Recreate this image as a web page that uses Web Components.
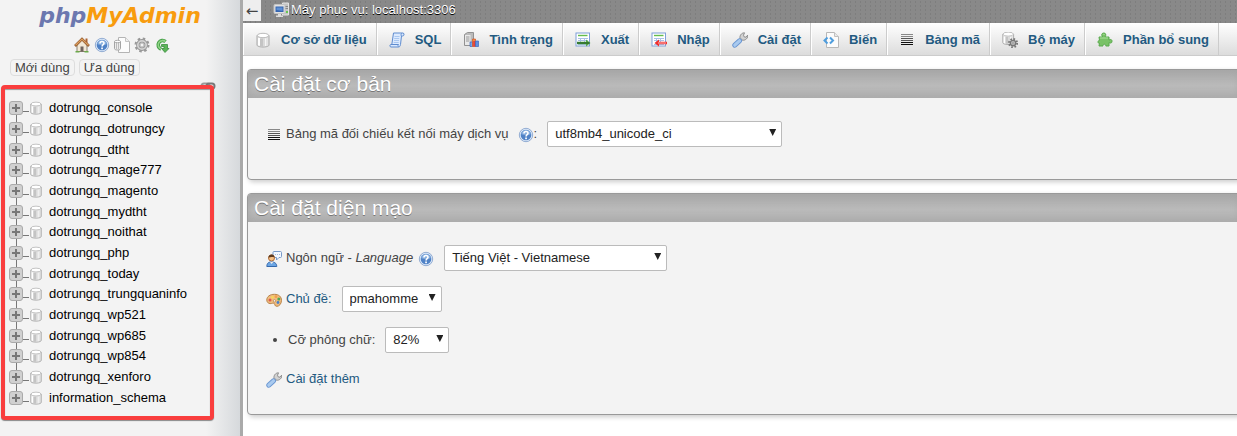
<!DOCTYPE html>
<html lang="vi">
<head>
<meta charset="utf-8">
<title>phpMyAdmin</title>
<style>
  html, body {
    height: 100%;
    margin: 0;
  }
  body {
    font: 13px/18px "Liberation Sans", Arial, sans-serif;
    color: #444;
    background: #fff;
    overflow: hidden;
  }
</style>
</head>
<body>

<pma-layout>
  <pma-navigation slot="navigation"></pma-navigation>
  <pma-server-bar>Máy phục vụ: localhost:3306</pma-server-bar>
  <pma-tabs>
    <pma-tab icon="db">Cơ sở dữ liệu</pma-tab>
    <pma-tab icon="sql">SQL</pma-tab>
    <pma-tab icon="status">Tình trạng</pma-tab>
    <pma-tab icon="export">Xuất</pma-tab>
    <pma-tab icon="import">Nhập</pma-tab>
    <pma-tab icon="wrench">Cài đặt</pma-tab>
    <pma-tab icon="vars">Biến</pma-tab>
    <pma-tab icon="lines">Bảng mã</pma-tab>
    <pma-tab icon="engine">Bộ máy</pma-tab>
    <pma-tab icon="plugin">Phần bổ sung</pma-tab>
  </pma-tabs>
  <pma-panel>
    <span slot="title">Cài đặt cơ bản</span>
    <pma-field icon="lines" size="xl" value="utf8mb4_unicode_ci" help colon>Bảng mã đối chiếu kết nối máy dịch vụ</pma-field>
  </pma-panel>
  <pma-panel>
    <span slot="title">Cài đặt diện mạo</span>
    <pma-field icon="language" size="l" value="Tiếng Việt - Vietnamese" help>Ngôn ngữ - <i>Language</i></pma-field>
    <pma-field icon="theme" size="m" value="pmahomme" link>Chủ đề:</pma-field>
    <pma-field size="s" value="82%">Cỡ phông chữ:</pma-field>
    <pma-link icon="wrench">Cài đặt thêm</pma-link>
  </pma-panel>
</pma-layout>

<script>
// Icons, all drawn on a 16x16 box
const DB = `
  <path d="M2 3.500v9.500c0 1 2 2 6 2s6-1 6-2V3.500z" fill="#e4e4e4" stroke="#a8a8a8"/>
  <path d="M3 6h2v7.800l-2-.6z" fill="#fff"/>
  <path d="M5 6.500h3v7.800H6l-1-.3z" fill="#c4c4c4"/>
  <path d="M8 6.500h2v7.700H8z" fill="#dadada"/>
  <path d="M10 6.500h1v7.500h-1z" fill="#f6f6f6"/>
  <ellipse cx="8" cy="3.500" rx="5.700" ry="2.200" fill="#fff" stroke="#bbb"/>`;

const GEAR = `
  <circle cx="8" cy="8" r="6.500" stroke="#999" stroke-width="2" stroke-dasharray="2.550 2.550"/>
  <circle cx="8" cy="8" r="4.200" fill="none" stroke="#939393" stroke-width="3.400"/>
  <circle cx="8" cy="8" r="4.200" fill="none" stroke="#d2d2d2" stroke-width="1.800"/>
  <circle cx="8" cy="8" r="2" fill="#f3f3f3" stroke="#8a8a8a" stroke-width=".6"/>`;

const SHEET = `
  <rect x="1" y="1" width="13.500" height="13" fill="#fff" stroke="#7f9fd8"/>
  <path d="M3 3.500h9.500" stroke="#64bd4b" stroke-width="1.400"/>
  <path d="M3 6.500h10M3 8.500h10M3 12.500h10M5.500 6v7M9.500 6v7" stroke="#a9c0e8"/>`;

const ICONS = {
  db: DB,
  gear: GEAR,
  home: `
    <path d="M3 8v6.500h10V8L8 3z" fill="#f2e8d6" stroke="#8a8173"/>
    <path d="M11.500 1.500h2V6h-2z" fill="#aa6335"/>
    <path d="M1 9l7-7 7 7" stroke="#935829" stroke-width="2.600"/>
    <path d="M1.500 8.300L8 2l6.500 6.300" stroke="#dda061" stroke-width="1.200"/>
    <path d="M6.500 9.500h3v5h-3z" fill="#70645e"/>
    <path d="M1.500 14.800h4M10.500 14.800h4" stroke="#6ba94a" stroke-width="1.400"/>`,
  help: `
    <circle cx="8" cy="8" r="6.700" fill="#dbe8f8" stroke="#7d9cc9" stroke-width=".8"/>
    <circle cx="8" cy="8" r="5.300" fill="#4f82c6"/>
    <path d="M3.200 7a4.900 4.900 0 0 1 9.600 0c-2 1.500-7 1.500-9.600 0z" fill="#86aede"/>
    <path d="M6 6.400c0-2.600 4-2.500 4-.2 0 1.500-1.900 1.400-1.900 3.200" stroke="#fff" stroke-width="1.600"/>
    <rect x="7.200" y="10.500" width="1.700" height="1.700" fill="#fff"/>`,
  docs: `
    <path d="M4.500.5h7l4 4v11h-11z" fill="#fcfcfc" stroke="#b4b4b4"/>
    <path d="M11.500.5v4h4" fill="#eee" stroke="#c4c4c4"/>
    <path d="M.5 4.500v7c0 1 1.200 1.500 3 1.500s3-.5 3-1.500v-7z" fill="#ececec" stroke="#a3a3a3"/>
    <path d="M2.500 6v6M4.500 6v6" stroke="#bbb"/>
    <ellipse cx="3.500" cy="4.500" rx="3" ry="1.200" fill="#fff" stroke="#aaa"/>`,
  reload: `
    <path d="M11.500 4.600A4.400 4.400 0 1 0 7 12" stroke="#3f9a42" stroke-width="3.600"/>
    <path d="M11.500 4.600A4.400 4.400 0 1 0 7 12" stroke="#8fd385" stroke-width="1.800"/>
    <path d="M7.500 7.500h6v4h1.500L11 15.500 7.500 11.500h2.500V9.500H7.500z" fill="#5cb557" stroke="#2c8332" stroke-width=".7"/>`,
  chain: `
    <rect x="1.500" y="5.500" width="8" height="5" rx="2.500" stroke="#999" stroke-width="2"/>
    <rect x="6.500" y="5.500" width="8" height="5" rx="2.500" stroke="#777" stroke-width="2"/>`,
  server: `
    <path d="M9.500 1h6v12h-6z" fill="#c4c4c4" stroke="#e4e4e4"/>
    <path d="M12 4.500h3M12 6.500h3" stroke="#888"/>
    <rect x="13" y="9" width="2" height="2" fill="#67c94f"/>
    <rect x="1" y="2.500" width="11" height="9" rx="1" fill="#e2e2e2" stroke="#c2c2c2"/>
    <rect x="2.500" y="4.500" width="8" height="5.500" fill="#3565b0"/>
    <path d="M3.500 5.500h6V9l-6-1z" fill="#5c8fd4"/>
    <path d="M5 12h3v1.500h2V15H3v-1.500h2z" fill="#ddd"/>`,
  sql: `
    <path d="M4.500 1h9.800c1.300 1.200.8 3-.8 3h-1l-1 8.500c-.2 1.500-.8 2.500-2 2.500H2c-1.500 0-1.500-2.500 0-2.500h.8z" fill="#dceafe" stroke="#5f8ccf"/>
    <path d="M12.500 4c-.8-.8-.5-2.300.5-2.800M2 12.500h7.500c-.8.8-.6 1.800.2 2.300" stroke="#5f8ccf"/>
    <path d="M5.500 4.500h5M5.200 6.500h5M5 8.500h5M4.700 10.500h5" stroke="#a9c7f0"/>`,
  status: `
    <path d="M1.500 2.500l3-2h6v11l-3 2h-6z" fill="#bbb" stroke="#929292"/>
    <path d="M2 3h5.500v10H2z" fill="#e9e9e9"/>
    <path d="M3 5h3.500M3 7h3.500M3 9h3.500" stroke="#999"/>
    <path d="M7 10h2.500v4.500H7z" fill="#78a5e8" stroke="#3d69bc" stroke-width=".7"/>
    <path d="M9.500 7h3v7.500h-3z" fill="#f5893d" stroke="#d3552b" stroke-width=".7"/>
    <path d="M10.200 9h2.300v5.500h-2.300z" fill="#e3423c"/>
    <path d="M12.500 9h3v5.500h-3z" fill="#5d91e3" stroke="#3d69bc" stroke-width=".7"/>`,
  export: SHEET + `
    <path d="M2 9.800h9V7.600l4.500 3.400-4.500 3.400v-2.200H2z" fill="#55a64a"/>
    <path d="M2 11h12.500" stroke="#1b4f1b"/>`,
  import: SHEET + `
    <path d="M16 9.800H8V7.600L3.500 11 8 14.400v-2.200h8z" fill="#ef3030"/>
    <path d="M7 11h8" stroke="#ffaeae"/>`,
  wrench: `
    <path d="M8 6.500C7.500 3.500 9.500.8 12.500.8l-1 2.400.7 1.700 1.800.3L15.800 3c.4 3-2.300 5.600-5.300 5.200z" fill="#d2d2d2" stroke="#8c8c8c"/>
    <path d="M7.500 8.500l2-2" stroke="#aaa" stroke-width="3"/>
    <path d="M2.800 13.200L7.500 8.800" stroke="#6b97d2" stroke-width="5" stroke-linecap="round"/>
    <path d="M2.800 13.200L7.500 8.800" stroke="#a9caef" stroke-width="3.200" stroke-linecap="round"/>`,
  vars: `
    <path d="M3.500.5h8l4 4v11h-12z" fill="#fbfbfb" stroke="#b8b8b8"/>
    <path d="M11.500.5v4h4" fill="#e9e9e9" stroke="#c0c0c0"/>
    <path d="M4.500 5.500L1.500 8.500l3 3M7 5.500l3 3-3 3" stroke="#4f9ddd" stroke-width="2"/>`,
  lines: `
    <path d="M2 2.500h12M2 4.500h12" stroke="#888"/>
    <path d="M2 6.500h12M2 8.500h12" stroke="#555"/>
    <path d="M2 10.500h12M2 12.500h12" stroke="#111"/>`,
  engine: `
    <g transform="translate(-1 -1) scale(.9)">${DB}</g>
    <g transform="translate(6 6) scale(.63)">
      <circle cx="8" cy="8" r="6.500" stroke="#777" stroke-width="3" stroke-dasharray="2.550 2.550"/>
      <circle cx="8" cy="8" r="4.300" fill="#c4c4c4" stroke="#777" stroke-width="2"/>
      <circle cx="8" cy="8" r="1.500" fill="#eee" stroke="#777"/>
    </g>`,
  plugin: `
    <path d="M2 5h3.500C4 2.500 5 1 6.800 1s2.700 1.500 1.300 4H12v3c2-1.200 3-.3 3 1.200s-1 2.500-3 1.400V14H8.800c.6-2.300-3.400-2.300-2.800 0H2l.5-2.800c-2 .5-2-3 0-2.700z" fill="#79c267" stroke="#5aaa4e"/>
    <path d="M3 6h8M5.800 2.800c.5-.8 1.500-.8 2 0" stroke="#abdf9c"/>`,
  language: `
    <path d="M7 1.500c0-.6.4-1 1-1h6.500c.6 0 1 .4 1 1v4c0 .6-.4 1-1 1H13L10.500 9V6.500H8c-.6 0-1-.4-1-1z" fill="#f3f8ff" stroke="#7799c8"/>
    <path d="M9 3.500h1M11 3.500h1M13 3.500h1" stroke="#aabfdc"/>
    <circle cx="5.500" cy="7" r="3" fill="#f5bf85" stroke="#ae6b37"/>
    <path d="M2.500 6.500c0-4 6-4 6-.3C6.500 6 5 5.500 2.500 6.500z" fill="#5c3b20"/>
    <path d="M.8 15.500c.2-3.800 2-4.500 4.700-4.500s5 .7 5.300 4.500z" fill="#6ca6e4" stroke="#3569ad"/>
    <path d="M4 11l1.500 2 2-2z" fill="#eee"/>`,
  theme: `
    <path d="M.8 8C.8 4.500 4 2.300 8.500 2.300s7 2.700 7 6c0 3.700-2.500 6-4.600 6-2.400 0-1.700-2-2.800-2.900-1-.8-2.300.4-4 .2C2 11.300.8 10 .8 8z" fill="#efbd7f" stroke="#b98349"/>
    <circle cx="4" cy="8" r="1.500" fill="#df594b"/>
    <circle cx="6.500" cy="5.300" r="1.400" fill="#f6d75a"/>
    <circle cx="10" cy="4.700" r="1.400" fill="#f3a04b"/>
    <circle cx="12.800" cy="7" r="1.500" fill="#51a951"/>
    <circle cx="12" cy="10.500" r="1.400" fill="#487fcb"/>
    <circle cx="8.500" cy="8.800" r="1.200" fill="#f5f5f5" stroke="#a96f36" stroke-width=".6"/>`
};

const DATABASES = [
  "dotrungq_console", "dotrungq_dotrungcy", "dotrungq_dtht", "dotrungq_mage777",
  "dotrungq_magento", "dotrungq_mydtht", "dotrungq_noithat", "dotrungq_php",
  "dotrungq_today", "dotrungq_trungquaninfo", "dotrungq_wp521", "dotrungq_wp685",
  "dotrungq_wp854", "dotrungq_xenforo", "information_schema"
];

const render = (element, html) => {
  element.attachShadow({ mode: "open" }).innerHTML = html;
};

class PmaIcon extends HTMLElement {
  connectedCallback() {
    render(this, `
      <style>
        :host { display: block; flex: none; width: 16px; height: 16px; }
        svg { display: block; width: 100%; height: 100%; }
      </style>
      <svg viewBox="0 0 16 16" fill="none" aria-hidden="true">${ICONS[this.getAttribute("name")]}</svg>
    `);
  }
}

class PmaLayout extends HTMLElement {
  connectedCallback() {
    render(this, `
      <style>
        :host { display: flex; min-height: 100vh; }
        main { flex: 1; min-width: 0; overflow: hidden; }
      </style>
      <slot name="navigation"></slot>
      <main><slot></slot></main>
    `);
  }
}

class PmaNavigation extends HTMLElement {
  connectedCallback() {
    const links = [
      ["home", "Trang chủ"], ["help", "Trợ giúp"], ["docs", "Tài liệu"],
      ["gear", "Cài đặt"], ["reload", "Tải lại"]
    ];
    render(this, `
      <style>
        :host {
          display: flex;
          flex: none;
          flex-direction: column;
          box-sizing: border-box;
          width: 243px;
          height: 100vh;
          border-right: 3px solid #aaa;
          background: linear-gradient(to left, #d6d9dc, #f3f3f3 34px);
        }
        a { color: inherit; text-decoration: none; }
        .logo {
          align-self: center;
          font: italic bold 22px/32px "DejaVu Sans", sans-serif;
          color: #f89c0e;
        }
        .logo span { color: #6c78af; }
        .links {
          display: flex;
          justify-content: center;
          gap: 4px;
          padding: 5px 0 0 3px;
        }
        .recent {
          display: flex;
          gap: 4px;
          padding: 6px 10px 0;
        }
        button {
          padding: 0 4px;
          border: 1px solid #ddd;
          border-radius: 4px;
          background: #f3f3f3;
          font: 13px/15px "Liberation Sans", Arial, sans-serif;
          color: #444;
        }
        .tree {
          position: relative;
          display: flex;
          flex: 1;
          margin: 9px 26px 16px 1px;
        }
        .tree pma-icon {
          position: absolute;
          top: -7px;
          right: -2px;
        }
        pma-tree { flex: 1; }
      </style>
      <a class="logo" href="#"><span>php</span>MyAdmin</a>
      <div class="links">
        ${links.map(([icon, label]) => `<a href="#" aria-label="${label}"><pma-icon name="${icon}"></pma-icon></a>`).join("")}
      </div>
      <div class="recent"><button>Mới dùng</button><button>Ưa dùng</button></div>
      <div class="tree"><pma-icon name="chain"></pma-icon><pma-tree></pma-tree></div>
    `);
  }
}

class PmaTree extends HTMLElement {
  connectedCallback() {
    render(this, `
      <style>
        :host {
          position: relative;
          display: flex;
          box-sizing: border-box;
          border: 4px solid #f93e3e;
          border-radius: 4px;
          box-shadow: 0 1px 1px #888, inset 0 1px 1px #999;
          background: #f3f3f3;
        }
        ul {
          display: flex;
          flex: 1;
          flex-direction: column;
          margin: 0;
          padding: 9px 4px 8px;
          list-style: none;
        }
        li { display: flex; flex: 1; align-items: center; }
        .toggle {
          display: flex;
          align-self: stretch;
          flex-direction: column;
          align-items: center;
          width: 14px;
        }
        .toggle::before, .toggle::after {
          content: "";
          flex: 1;
          width: 1px;
          background: #777;
        }
        li:first-child .toggle::before, li:last-child .toggle::after { background: none; }
        button {
          display: block;
          width: 14px;
          height: 14px;
          padding: 0;
          border: 1px solid #aaa;
          border-radius: 3px;
          background:
            linear-gradient(#777, #777) center / 8px 2px no-repeat,
            linear-gradient(#777, #777) center / 2px 8px no-repeat,
            #d0d0d0;
        }
        .branch { width: 6px; height: 1px; margin-top: 7px; background: #777; }
        pma-icon { width: 14px; height: 14px; }
        a { margin-left: 6px; color: #000; text-decoration: none; }
      </style>
      <ul>
        ${DATABASES.map((name) => `
          <li>
            <span class="toggle"><button aria-label="${name}"></button></span>
            <span class="branch"></span>
            <pma-icon name="db"></pma-icon>
            <a href="#">${name}</a>
          </li>`).join("")}
      </ul>
    `);
  }
}

class PmaServerBar extends HTMLElement {
  connectedCallback() {
    render(this, `
      <style>
        :host {
          display: flex;
          align-items: flex-start;
          height: 23px;
          background:
            radial-gradient(circle, #7e7e7e 0 1px, transparent 1px) 0 0 / 5px 4px,
            #898989;
        }
        button {
          width: 18px;
          height: 21px;
          padding: 0;
          border: 0;
          background: #eee;
          font: 15px/20px "DejaVu Sans", sans-serif;
          color: #444;
        }
        pma-icon { margin: 2px 2px 0 12px; }
        a {
          padding-top: 1px;
          color: #fff;
          text-decoration: none;
          text-shadow: 0 1px 0 #000;
        }
      </style>
      <button aria-label="Ẩn bảng điều hướng">←</button>
      <pma-icon name="server"></pma-icon>
      <a href="#"><slot></slot></a>
    `);
  }
}

class PmaTabs extends HTMLElement {
  connectedCallback() {
    render(this, `
      <style>
        :host {
          display: flex;
          height: 32px;
          border-bottom: 1px solid #ccc;
          background: linear-gradient(#fff, #dcdcdc);
        }
      </style>
      <slot></slot>
    `);
  }
}

class PmaTab extends HTMLElement {
  connectedCallback() {
    render(this, `
      <style>
        :host {
          display: block;
          border-right: 1px solid #ccc;
          border-left: 1px solid #fff;
        }
        a {
          display: flex;
          align-items: center;
          gap: 10px;
          height: 32px;
          padding: 1px 9px 0 11px;
          box-sizing: border-box;
          font-weight: bold;
          color: #235a81;
          text-decoration: none;
          white-space: nowrap;
        }
      </style>
      <a href="#"><pma-icon name="${this.getAttribute("icon")}"></pma-icon><slot></slot></a>
    `);
  }
}

class PmaPanel extends HTMLElement {
  connectedCallback() {
    // The panel runs a little past the right edge of the window
    render(this, `
      <style>
        :host {
          display: block;
          margin: 13px -4px 0 4px;
          border: 1px solid #999;
          border-radius: 4px;
          background: #f3f3f3;
          box-shadow: 2px 2px 5px #ccc;
        }
        h2 {
          margin: 0;
          padding: 0 6px;
          border-radius: 3px 3px 0 0;
          background: linear-gradient(#a8a8a8, #bababa 55%, #b0b0b0);
          box-shadow: inset 0 0 8px #a6a6a6;
          font-size: 21px;
          font-weight: normal;
          line-height: 28px;
          color: #fff;
          text-shadow: 0 1px 0 #777;
        }
        .body {
          display: flex;
          flex-direction: column;
          gap: 15px;
          padding: 23px 18px 26px;
        }
      </style>
      <h2><slot name="title"></slot></h2>
      <div class="body"><slot></slot></div>
    `);
  }
}

class PmaField extends HTMLElement {
  connectedCallback() {
    const icon = this.getAttribute("icon");
    render(this, `
      <style>
        :host { display: flex; align-items: center; --width: 64px; }
        :host([size="m"]) { --width: 100px; }
        :host([size="l"]) { --width: 223px; }
        :host([size="xl"]) { --width: 235px; margin-bottom: 6px; }
        :host([link]) label { color: #235a81; }
        pma-icon { margin-top: 2px; }
        label { margin: 0 8px 0 4px; }
        .help {
          display: flex;
          margin-left: -3px;
          color: #235a81;
          text-decoration: none;
        }
        :host([colon]) .help { margin-left: 1px; }
        .bullet {
          width: 4px;
          height: 4px;
          margin: 0 7px 0 7px;
          border-radius: 50%;
          background: #444;
        }
        .select {
          position: relative;
          width: var(--width);
          margin-left: 2px;
        }
        .help ~ .select { margin-left: 10px; }
        select {
          appearance: none;
          display: block;
          box-sizing: border-box;
          width: 100%;
          height: 26px;
          padding: 0 20px 0 7px;
          border: 1px solid #bbb;
          border-radius: 2px;
          background: #fff;
          font: 13px/18px "Liberation Sans", Arial, sans-serif;
          color: #222;
        }
        .select::after {
          content: "";
          position: absolute;
          top: 8px;
          right: 6px;
          width: 7px;
          height: 7px;
          background: #222;
          clip-path: polygon(0 0, 100% 0, 50% 100%);
          pointer-events: none;
        }
      </style>
      ${icon ? `<pma-icon name="${icon}"></pma-icon>` : `<span class="bullet"></span>`}
      <label for="control"><slot></slot></label>
      ${this.hasAttribute("help") ? `<a class="help" href="#" aria-label="Trợ giúp"><pma-icon name="help"></pma-icon></a>` : ""}
      ${this.hasAttribute("colon") ? `<span>:</span>` : ""}
      <span class="select"><select id="control"><option>${this.getAttribute("value")}</option></select></span>
    `);
  }
}

class PmaLink extends HTMLElement {
  connectedCallback() {
    render(this, `
      <style>
        :host { display: flex; }
        a {
          display: flex;
          gap: 4px;
          height: 20px;
          line-height: 22px;
          color: #235a81;
          text-decoration: none;
        }
        pma-icon { margin-top: 4px; }
      </style>
      <a href="#"><pma-icon name="${this.getAttribute("icon")}"></pma-icon><slot></slot></a>
    `);
  }
}

customElements.define("pma-icon", PmaIcon);
customElements.define("pma-layout", PmaLayout);
customElements.define("pma-navigation", PmaNavigation);
customElements.define("pma-tree", PmaTree);
customElements.define("pma-server-bar", PmaServerBar);
customElements.define("pma-tabs", PmaTabs);
customElements.define("pma-tab", PmaTab);
customElements.define("pma-panel", PmaPanel);
customElements.define("pma-field", PmaField);
customElements.define("pma-link", PmaLink);
</script>
</body>
</html>
